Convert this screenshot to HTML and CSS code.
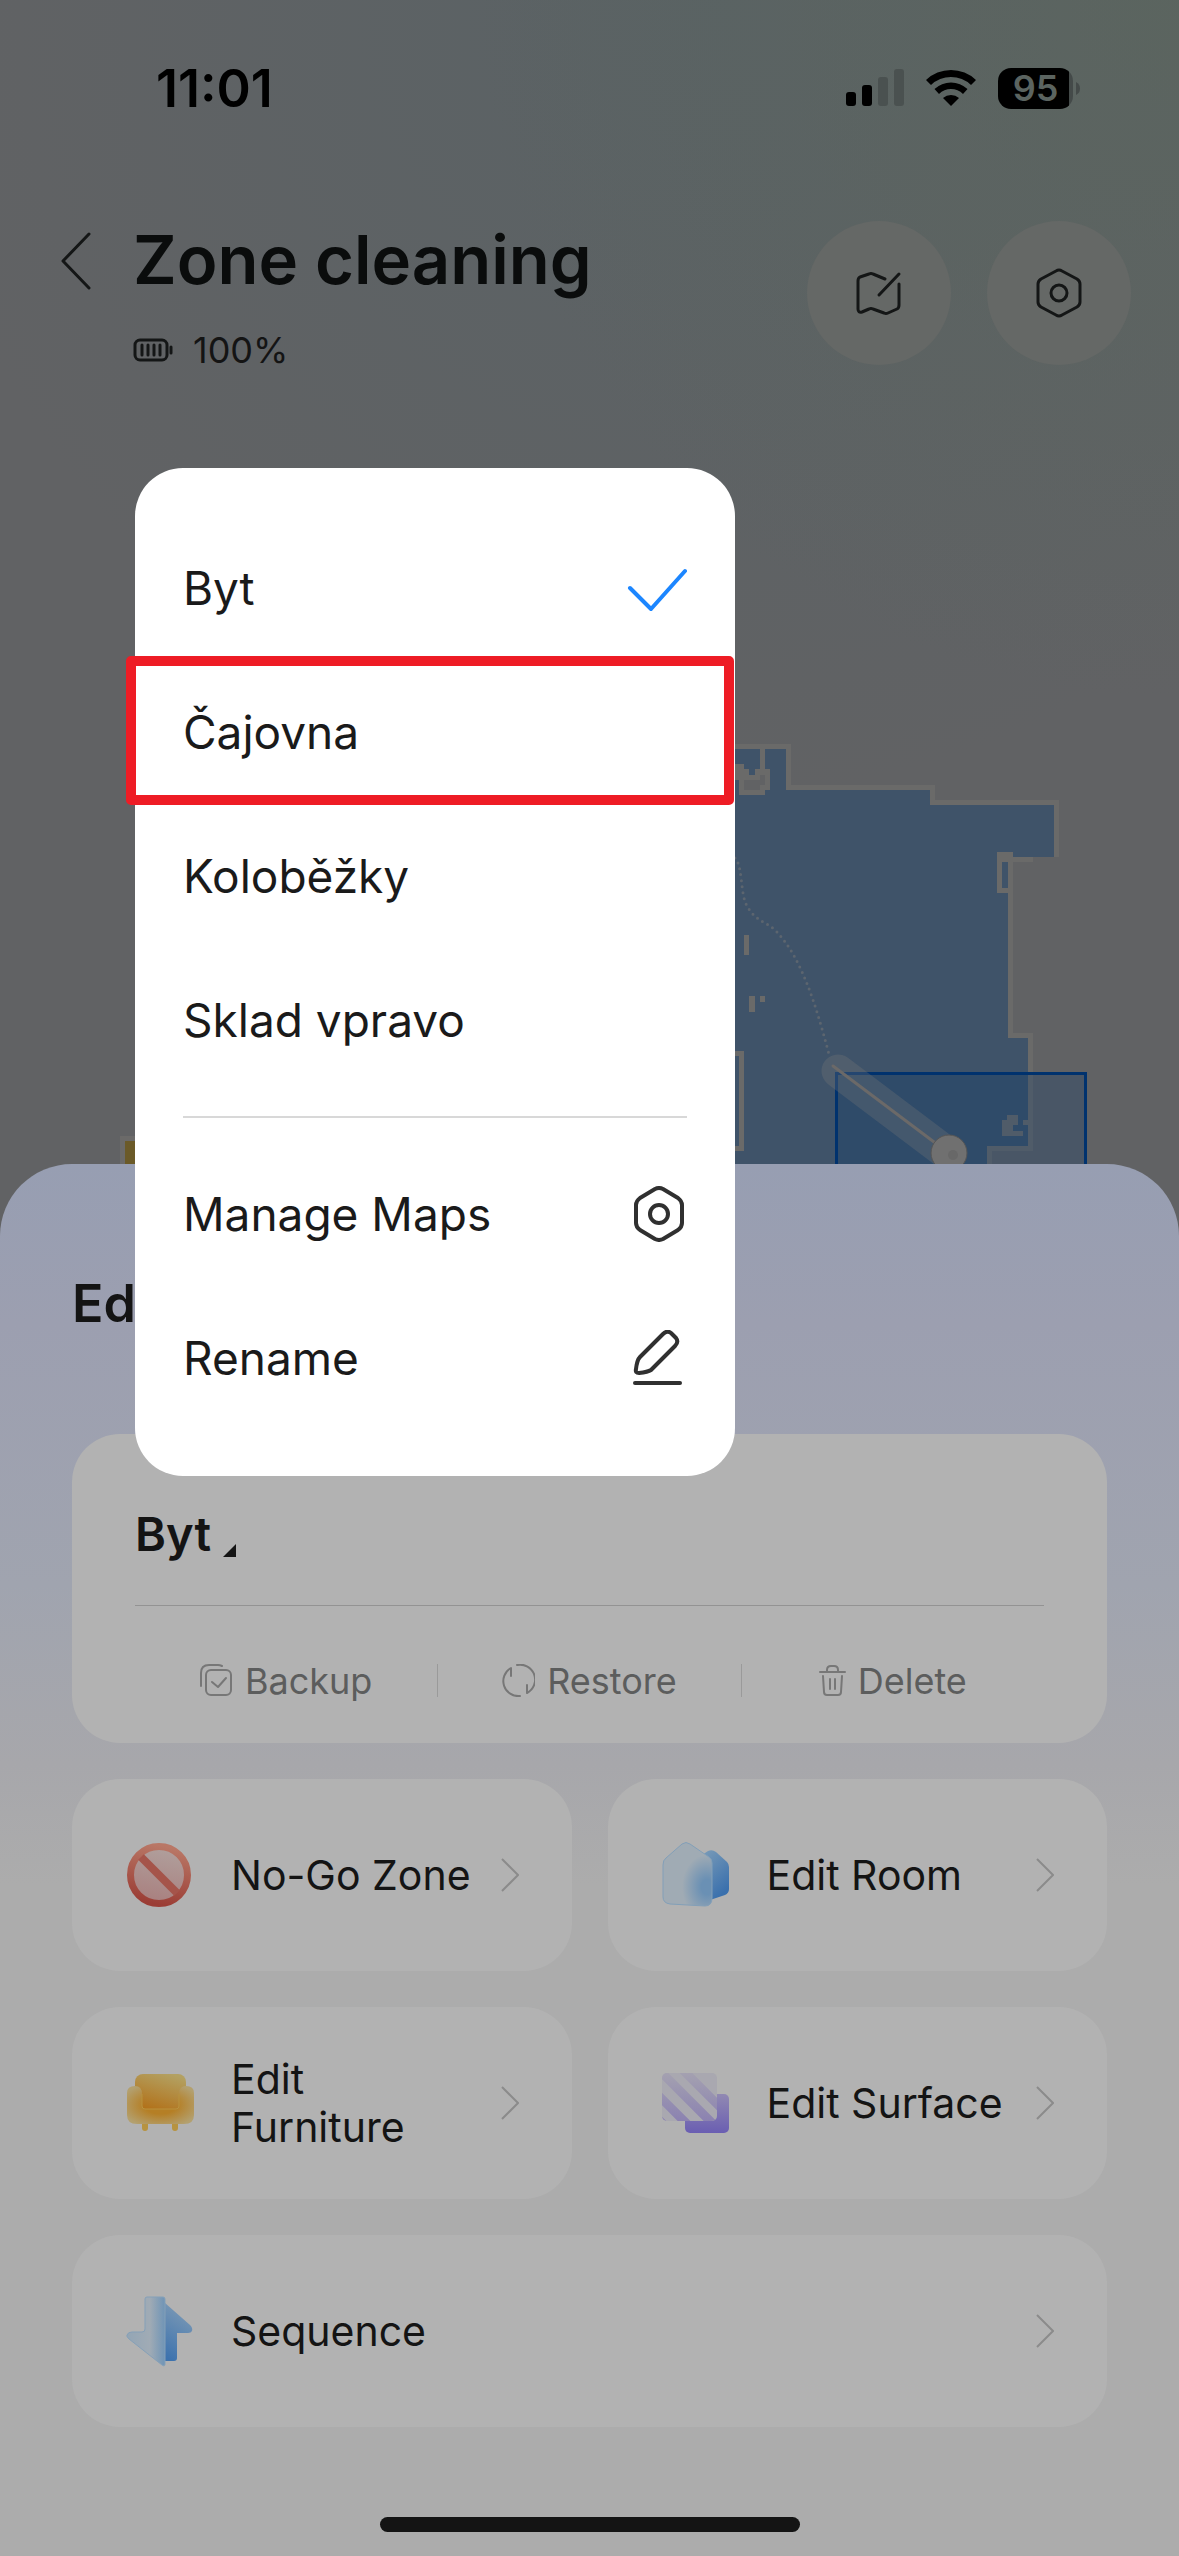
FILE: index.html
```html
<!DOCTYPE html>
<html lang="en">
<head>
    <meta charset="UTF-8">
    <meta name="viewport" content="width=device-width, initial-scale=1.0">
    <title>Zone cleaning</title>
    <link rel="stylesheet" href="styles.css">
</head>
<body>
    <div class="screen">
        <div class="status-bar">
            <span class="time">11:01</span>
            <div class="status-icons">
                <svg width="58" height="38" viewBox="0 0 58 38">
                    <rect x="0" y="23" width="10" height="14" rx="3"/>
                    <rect x="16" y="16" width="10" height="21" rx="3"/>
                    <rect x="32" y="8" width="10" height="29" rx="3" fill="#4a5150"/>
                    <rect x="48" y="0" width="10" height="37" rx="3" fill="#4a5150"/>
                </svg>
                <svg width="50" height="38" viewBox="0 0 50 38">
                    <path d="M0 11 A36 36 0 0 1 50 11 L45 16 A29 29 0 0 0 5 16 Z"/>
                    <path d="M8.500 20 A24 24 0 0 1 41.500 20 L37 25 A17 17 0 0 0 13 25 Z"/>
                    <path d="M17 29 A12 12 0 0 1 33 29 L25 37 Z"/>
                </svg>
                <div class="battery">
                    <span class="battery-level">95</span>
                    <svg width="5" height="13" viewBox="0 0 5 13"><path d="M0 0 Q4 2 4 6.500 Q4 11 0 13 Z" fill="#444a49"/></svg>
                </div>
            </div>
        </div>

        <header class="header">
            <button class="back" aria-label="Back">
                <svg width="32" height="58" viewBox="0 0 32 58"><path d="M29 2 L3 29 L29 56" class="line"/></svg>
            </button>
            <div class="heading">
                <h1>Zone cleaning</h1>
                <div class="charge">
                    <svg width="40" height="24" viewBox="0 0 40 24">
                        <g class="line">
                            <rect x="2" y="2" width="32" height="20" rx="5"/>
                            <path d="M9 7V17 M15 7V17 M21 7V17 M27 7V17 M38 9V15"/>
                        </g>
                    </svg>
                    <span>100%</span>
                </div>
            </div>
            <button class="round" aria-label="Edit map">
                <svg width="46" height="46" viewBox="0 0 46 46">
                    <path class="line" d="M29 9 L17 4 Q15 3 13 4 L4 7 Q2 8 2 11 V39 Q2 43 6 42 L13 39 Q15 38 17 39 L28 43 Q30 44 32 43 L41 39 Q43 38 43 35 V14 M43 4 L23 25"/>
                </svg>
            </button>
            <button class="round" aria-label="Settings">
                <svg width="46" height="50" viewBox="0 0 46 50">
                    <path class="line" d="M20 3 Q23 1 26 3 L41 11 Q44 13 44 16 V34 Q44 37 41 39 L26 47 Q23 49 20 47 L5 39 Q2 37 2 34 V16 Q2 13 5 11 Z"/>
                    <circle class="line" cx="23" cy="25" r="8"/>
                </svg>
            </button>
        </header>

        <svg class="map" viewBox="0 0 1179 740">
            <path d="M700 322H788V363H932V379H1056V433H1010V611H1030V724H989V740H700Z" fill="#3f5369"/>
            <g fill="none" stroke="#6a6a69" stroke-width="5">
                <path d="M700 322.500H788.500V363.500H932.500V378.500H1056.500V433"/>
                <path d="M1033 435.500H1010.500V611.500H1030.500V724.500H989.500V740"/>
                <path d="M1010 433H999.500V466.500H1010"/>
                <path d="M762.500 322V348 M700 629.500H741.500V724.500H700"/>
            </g>
            <g fill="#6a6a69">
                <rect x="997" y="428" width="16" height="10"/>
                <path d="M735 340H744V345H749V351H755V345H770V366H765V371H739V356H735Z"/>
                <path d="M744 356H760V351H765V361H760V366H744Z" fill="#616264"/>
                <rect x="744" y="511" width="5" height="20"/>
                <rect x="749" y="572" width="6" height="16"/>
                <rect x="760" y="572" width="5" height="6"/>
                <path d="M1002 696H1007V691H1018V701H1013V707H1023V712H1002Z"/>
                <rect x="1023" y="696" width="8" height="5"/>
            </g>
            <path d="M735 434 C743 442 740 470 747 482 C756 498 768 498 777 508 C803 536 817 585 830 634" fill="none" stroke="#5c656f" stroke-width="3" stroke-linecap="round" stroke-dasharray="0 6"/>
            <rect x="836.500" y="649.500" width="249" height="110" fill="#00326e" fill-opacity="0.240" stroke="#00326e" stroke-width="3"/>
            <path d="M838 647 L948 730" stroke="#777" stroke-opacity="0.300" stroke-width="33" stroke-linecap="round"/>
            <path d="M833 642 L934 718" stroke="#6b6968" stroke-width="3" stroke-linecap="round"/>
            <circle cx="949" cy="729" r="18" fill="#707070" stroke="#555" stroke-width="1"/>
            <circle cx="953" cy="731" r="5" fill="#686868"/>
            <path d="M120 740V712H160V740Z" fill="#6b6a69"/>
            <path d="M125 740V717H160V740Z" fill="#6b5a28"/>
        </svg>

        <main class="sheet">
            <h2>Edit Map</h2>

            <section class="card map-card">
                <button class="map-name">
                    Byt
                    <svg width="13" height="13" viewBox="0 0 13 13"><path d="M13 0V13H0Z" fill="#141414"/></svg>
                </button>
                <div class="actions">
                    <button>
                        <svg width="33" height="33" viewBox="0 0 33 33">
                            <path class="thin" d="M22 2 Q20 1 18 1 H9 Q1 1 1 9 V22"/>
                            <rect class="thin" x="6" y="6" width="25" height="25" rx="5"/>
                            <path class="thin" d="M12 18 L18 23 L26 14"/>
                        </svg>
                        Backup
                    </button>
                    <button>
                        <svg width="33" height="33" viewBox="0 0 33 33">
                            <path class="thin" d="M15 1 A15 15 0 0 1 25 29 V21 M18 32 A15 15 0 0 1 9 4 V12"/>
                        </svg>
                        Restore
                    </button>
                    <button>
                        <svg width="27" height="33" viewBox="0 0 27 33">
                            <path class="thin" d="M1 8 H26 M8 8 V6 Q8 2 12 2 H15 Q19 2 19 6 V8 M4 12 L5 28 Q5 31 8 31 H19 Q22 31 22 28 L23 12 M11 15 V25 M16 15 V25"/>
                        </svg>
                        Delete
                    </button>
                </div>
            </section>

            <nav class="tools">
                <button class="card tool">
                    <svg class="tool-icon" viewBox="0 0 72 72">
                        <defs>
                            <linearGradient id="red" x1="0.600" y1="0" x2="0.400" y2="1">
                                <stop offset="0" stop-color="#b97766"/>
                                <stop offset="1" stop-color="#9b3d35"/>
                            </linearGradient>
                            <linearGradient id="pink" x1="0.600" y1="0" x2="0.400" y2="1">
                                <stop offset="0" stop-color="#b09f9c"/>
                                <stop offset="1" stop-color="#a9807f"/>
                            </linearGradient>
                        </defs>
                        <circle cx="33" cy="36" r="27" fill="url(#pink)"/>
                        <circle cx="33" cy="36" r="28.500" fill="none" stroke="url(#red)" stroke-width="7"/>
                        <path d="M15 18 L51 54" stroke="#a5544a" stroke-width="8"/>
                    </svg>
                    <span>No-Go Zone</span>
                    <svg class="arrow" viewBox="0 0 18 34"><path d="M1 1 L17 17 L1 33"/></svg>
                </button>
                <button class="card tool">
                    <svg class="tool-icon" viewBox="0 0 72 72">
                        <defs>
                            <linearGradient id="house" x1="0" y1="0" x2="0.500" y2="1">
                                <stop offset="0" stop-color="#7b9cb8"/>
                                <stop offset="1" stop-color="#3a70ad"/>
                            </linearGradient>
                            <radialGradient id="glass" cx="0.900" cy="0.700" r="0.600">
                                <stop offset="0.200" stop-color="#6a90b4"/>
                                <stop offset="0.850" stop-color="#a0abb4"/>
                            </radialGradient>
                        </defs>
                        <path d="M40 16 L46 12 Q50 10 54 13 L65 23 Q67 25 67 28 V50 Q67 54 63 56 L48 61 Z" fill="url(#house)"/>
                        <path d="M20 5 Q24 2 28 5 L47 18 Q50 20 50 24 V59 Q50 67 43 67 L8 65 Q1 64 1 58 V26 Q1 21 4 19 Z" fill="url(#glass)" stroke="#829fb8" stroke-width="1"/>
                    </svg>
                    <span>Edit Room</span>
                    <svg class="arrow" viewBox="0 0 18 34"><path d="M1 1 L17 17 L1 33"/></svg>
                </button>
                <button class="card tool">
                    <svg class="tool-icon" viewBox="0 0 72 72">
                        <defs>
                            <linearGradient id="seat" x1="0.700" y1="0" x2="0.300" y2="1">
                                <stop offset="0" stop-color="#b3a162"/>
                                <stop offset="1" stop-color="#b26f16"/>
                            </linearGradient>
                            <radialGradient id="base" cx="0.500" cy="0.500" r="0.600">
                                <stop offset="0.400" stop-color="#b57f25"/>
                                <stop offset="1" stop-color="#b3a06f"/>
                            </radialGradient>
                        </defs>
                        <path d="M16 56 H22 V61 Q22 64 19 64 Q16 64 16 61 Z M46 56 H52 V61 Q52 64 49 64 Q46 64 46 61 Z" fill="#b79340"/>
                        <rect x="9" y="7" width="51" height="38" rx="8" fill="url(#seat)"/>
                        <path d="M1 26 Q1 19 9 19 Q16 19 16 27 V39 Q16 42 19 42 H50 Q53 42 53 39 V27 Q53 19 60 19 Q68 19 68 26 V48 Q68 57 58 57 H11 Q1 57 1 48 Z" fill="url(#base)"/>
                        <path d="M16 27 V39 Q16 42 19 42 H50 Q53 42 53 39 V27" fill="none" stroke="#b8923f" stroke-width="1"/>
                    </svg>
                    <span>Edit Furniture</span>
                    <svg class="arrow" viewBox="0 0 18 34"><path d="M1 1 L17 17 L1 33"/></svg>
                </button>
                <button class="card tool">
                    <svg class="tool-icon" viewBox="0 0 72 72">
                        <defs>
                            <linearGradient id="violet" x1="0" y1="0" x2="0" y2="1">
                                <stop offset="0" stop-color="#9189b2"/>
                                <stop offset="1" stop-color="#6a5eb2"/>
                            </linearGradient>
                            <linearGradient id="stripe" gradientUnits="userSpaceOnUse" x1="0" y1="6" x2="0" y2="54">
                                <stop offset="0" stop-color="#a4a1b0"/>
                                <stop offset="1" stop-color="#8b82b1"/>
                            </linearGradient>
                            <clipPath id="tile"><rect x="0" y="6" width="55" height="48" rx="5"/></clipPath>
                        </defs>
                        <rect x="23" y="27" width="44" height="39" rx="5" fill="url(#violet)"/>
                        <g clip-path="url(#tile)">
                            <rect x="0" y="6" width="55" height="48" fill="#a9a8b0"/>
                            <path d="M-6 0 L56 62 M-6 26 L30 62 M18 0 L74 56 M-6 50 L6 62" stroke="url(#stripe)" stroke-width="9"/>
                        </g>
                    </svg>
                    <span>Edit Surface</span>
                    <svg class="arrow" viewBox="0 0 18 34"><path d="M1 1 L17 17 L1 33"/></svg>
                </button>
                <button class="card tool wide">
                    <svg class="tool-icon" viewBox="0 0 72 72">
                        <defs>
                            <linearGradient id="up" x1="0.500" y1="0" x2="0.200" y2="1">
                                <stop offset="0" stop-color="#7d9ab5"/>
                                <stop offset="1" stop-color="#3c72ae"/>
                            </linearGradient>
                            <linearGradient id="down" x1="0" y1="0" x2="1" y2="0">
                                <stop offset="0" stop-color="#93a5b5"/>
                                <stop offset="0.600" stop-color="#a0abb5"/>
                                <stop offset="1" stop-color="#6f94b6"/>
                            </linearGradient>
                        </defs>
                        <path d="M39 8 L64 30 Q67 33 66 36 Q65 38 62 38 H51 V63 Q51 66 48 66 H39 Z" fill="url(#up)"/>
                        <path d="M19 4 Q19 2 21 2 H37 Q39 2 39 4 V69 Q39 72 36 70 L3 44 Q0 41 1 40 Q2 37 6 37 H16 Q19 37 19 34 Z" fill="url(#down)" stroke="#85a0b8" stroke-width="1"/>
                    </svg>
                    <span>Sequence</span>
                    <svg class="arrow" viewBox="0 0 18 34"><path d="M1 1 L17 17 L1 33"/></svg>
                </button>
            </nav>

            <div class="home-indicator"></div>
        </main>

        <!-- map picker popup -->
        <div class="menu">
            <button class="menu-item">
                Byt
                <svg width="60" height="48" viewBox="0 0 60 48"><path class="check" d="M3 24 L24 45 L58 7"/></svg>
            </button>
            <button class="menu-item marked">Čajovna</button>
            <button class="menu-item">Koloběžky</button>
            <button class="menu-item">Sklad vpravo</button>
            <hr>
            <button class="menu-item">
                Manage Maps
                <svg width="56" height="56" viewBox="0 0 56 56">
                    <path class="icon" d="M24 3 Q28 1 32 3 L47 12 Q51 15 51 19 V37 Q51 41 47 44 L32 53 Q28 55 24 53 L9 44 Q5 41 5 37 V19 Q5 15 9 12 Z"/>
                    <circle class="icon" cx="28" cy="28" r="9"/>
                </svg>
            </button>
            <button class="menu-item">
                Rename
                <svg width="56" height="56" viewBox="0 0 56 56">
                    <path class="icon" d="M32 4 Q36 0 40 3 L45 8 Q48 12 44 16 L20 40 Q17 42 8 43 Q4 43 5 39 Q6 30 9 27 Z"/>
                    <path class="icon" d="M4 53 H49"/>
                </svg>
            </button>
        </div>
    </div>
</body>
</html>
```
FILE: styles.css
```css
* {
    box-sizing: border-box;
}
body {
    margin: 0;
    font-family: Inter, "Liberation Sans", sans-serif;
    color: #141414;
    background: #acacac;
}
button {
    margin: 0;
    padding: 0;
    border: none;
    background: none;
    font: inherit;
    color: inherit;
    text-align: left;
}
svg {
    display: block;
    flex-shrink: 0;
}
.screen {
    position: relative;
    background:
        radial-gradient(circle at 100% 0, rgba(90, 101, 94, 0.8) 0, rgba(90, 101, 94, 0) 700px),
        radial-gradient(circle at 60% 0, rgba(88, 98, 101, 0.8) 0, rgba(88, 98, 101, 0) 800px),
        #616264;
}

/* status bar */
.status-bar {
    display: flex;
    justify-content: space-between;
    align-items: center;
    height: 176px;
    padding: 0 98px 0 156px;
    color: #000;
}
.time {
    font-size: 52px;
    font-weight: 600;
}
.status-icons {
    display: flex;
    align-items: center;
    gap: 22px;
}
.battery {
    display: flex;
    align-items: center;
    gap: 3px;
}
.battery-level {
    width: 75px;
    border-radius: 13px;
    background: linear-gradient(90deg, #000 71px, #444a49 71px);
    color: #5b6460;
    font-size: 36px;
    font-weight: 600;
    line-height: 41px;
    text-align: center;
}

/* header */
.header {
    display: flex;
    align-items: center;
    height: 248px;
    padding: 0 48px 14px 60px;
}
.line {
    fill: none;
    stroke: #141616;
    stroke-width: 3;
    stroke-linecap: round;
    stroke-linejoin: round;
}
.back {
    align-self: flex-start;
    padding-top: 56px;
}
.heading {
    flex: 1;
    padding: 4px 0 0 41px;
}
h1 {
    margin: 0;
    font-size: 67px;
    font-weight: 600;
    line-height: 84px;
    color: #0a0c0c;
}
.charge {
    display: flex;
    align-items: center;
    gap: 20px;
    padding-top: 26px;
    font-size: 36px;
    line-height: 44px;
}
.round {
    display: flex;
    align-items: center;
    justify-content: center;
    width: 144px;
    height: 144px;
    margin-left: 36px;
    border-radius: 50%;
    background: #656866;
}

.map {
    width: 100%;
    height: auto;
}

/* bottom sheet */
.sheet {
    padding: 104px 72px 24px;
    border-radius: 72px 72px 0 0;
    background: linear-gradient(#979eb2 0, #9c9fb0 160px, #a0a4af 420px, #a7a7ab 600px, #acacac 720px);
}
h2 {
    margin: 0 0 94px;
    font-size: 52px;
    font-weight: 600;
    line-height: 72px;
}
.card {
    border-radius: 48px;
    background: #b2b2b2;
}
.map-card {
    padding: 72px 63px 0;
}
.map-name {
    display: flex;
    align-items: flex-end;
    gap: 12px;
    font-size: 47px;
    font-weight: 600;
    line-height: 56px;
}
.map-name svg {
    margin-bottom: 5px;
}
.actions {
    display: flex;
    align-items: center;
    height: 138px;
    margin-top: 43px;
    padding-top: 12px;
    border-top: 1px solid #939393;
    color: #5c5d5d;
    font-size: 36px;
}
.actions button {
    display: flex;
    flex: 1;
    align-items: center;
    justify-content: center;
    gap: 12px;
    line-height: 30px;
}
.actions button + button {
    border-left: 1px solid #9a9a9a;
}
.thin {
    fill: none;
    stroke: #777;
    stroke-width: 2;
    stroke-linecap: round;
    stroke-linejoin: round;
}
.tools {
    display: grid;
    grid-template-columns: 1fr 1fr;
    gap: 36px;
    margin-top: 36px;
}
.tool {
    display: flex;
    align-items: center;
    height: 192px;
    padding: 0 53px 0 54px;
    font-size: 41px;
    line-height: 48px;
}
.tool span {
    flex: 1;
    padding: 0 24px 0 33px;
}
.tool-icon {
    width: 72px;
    height: 72px;
}
.arrow {
    width: 18px;
    height: 34px;
    fill: none;
    stroke: #8b8b8b;
    stroke-width: 2;
}
.wide {
    grid-column: span 2;
}
.home-indicator {
    width: 420px;
    height: 15px;
    margin: 90px auto 0;
    border-radius: 8px;
    background: #141414;
}

/* popup menu */
.menu {
    position: absolute;
    top: 468px;
    left: 135px;
    width: 600px;
    padding: 48px 0 46px;
    border-radius: 48px;
    background: #fff;
    color: #1a1a1a;
}
.menu-item {
    position: relative;
    display: flex;
    align-items: center;
    justify-content: space-between;
    width: 100%;
    height: 144px;
    padding: 0 48px;
    font-size: 46px;
}
.menu hr {
    height: 2px;
    margin: 24px 48px;
    border: none;
    background: #d8d8d8;
}
.marked::after {
    content: "";
    position: absolute;
    inset: -4px 1px -1px -9px;
    border: 10px solid #ee1c25;
    border-radius: 5px;
}
.check {
    fill: none;
    stroke: #1c86ff;
    stroke-width: 4;
    stroke-linecap: round;
    stroke-linejoin: round;
}
.icon {
    fill: none;
    stroke: #303030;
    stroke-width: 4;
    stroke-linecap: round;
    stroke-linejoin: round;
}
```
